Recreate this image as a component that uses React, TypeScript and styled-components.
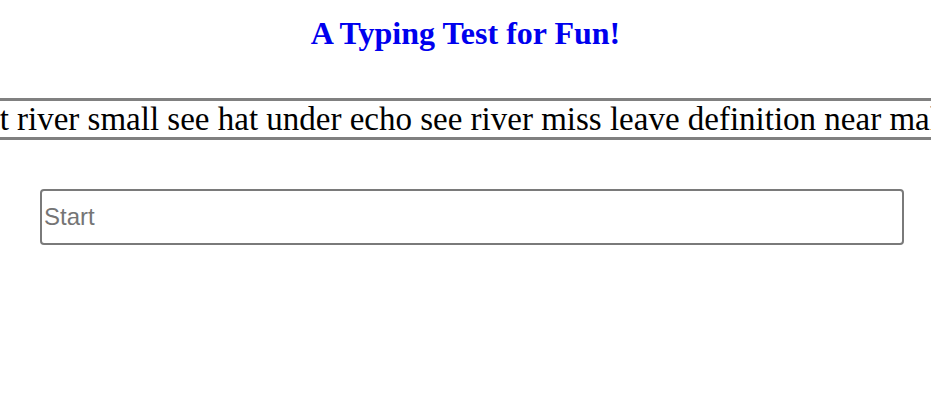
import React from "react";
import styled, { createGlobalStyle } from "styled-components";

const Global = createGlobalStyle`
  html, body { margin: 0; padding: 0; background: #ffffff; }
  body { font-family: "Liberation Serif", "Times New Roman", serif; }
`;

const Page = styled.div`
  display: flex;
  flex-direction: column;
  width: 100%;
  overflow: hidden;
`;

const Title = styled.h1`
  margin: 15px 0 0;
  text-align: center;
  color: #0000ee;
  font-family: "Liberation Serif", "Times New Roman", serif;
  font-weight: bold;
  font-size: 32px;
  line-height: 36px;
`;

const WordStrip = styled.div`
  margin-top: 47px;
  border-top: 3px solid #808080;
  border-bottom: 3px solid #808080;
  overflow: hidden;
  white-space: nowrap;
  height: 36px;
`;

const Words = styled.div<{ $shift: number }>`
  font-family: "Liberation Serif", "Times New Roman", serif;
  font-size: 33px;
  line-height: 37px;
  color: #000;
  margin-left: ${(p) => -p.$shift}px;
`;

const InputRow = styled.div`
  display: flex;
  padding: 49px 27px 0 40px;
`;

const TypeInput = styled.input`
  flex: 1;
  height: 56px;
  box-sizing: border-box;
  border: 2px solid #7a7a7a;
  border-radius: 4px;
  padding: 0 2px;
  font-family: "Liberation Sans", Arial, sans-serif;
  font-size: 24px;
  color: #000;
  outline: none;
  &::placeholder { color: #757575; }
`;

export default function App() {
  return (
    <Page>
      <Global />
      <Title>A Typing Test for Fun!</Title>
      <WordStrip>
        <Words $shift={15}>
          at river small see hat under echo see river miss leave definition near make with
        </Words>
      </WordStrip>
      <InputRow>
        <TypeInput placeholder="Start" />
      </InputRow>
    </Page>
  );
}
